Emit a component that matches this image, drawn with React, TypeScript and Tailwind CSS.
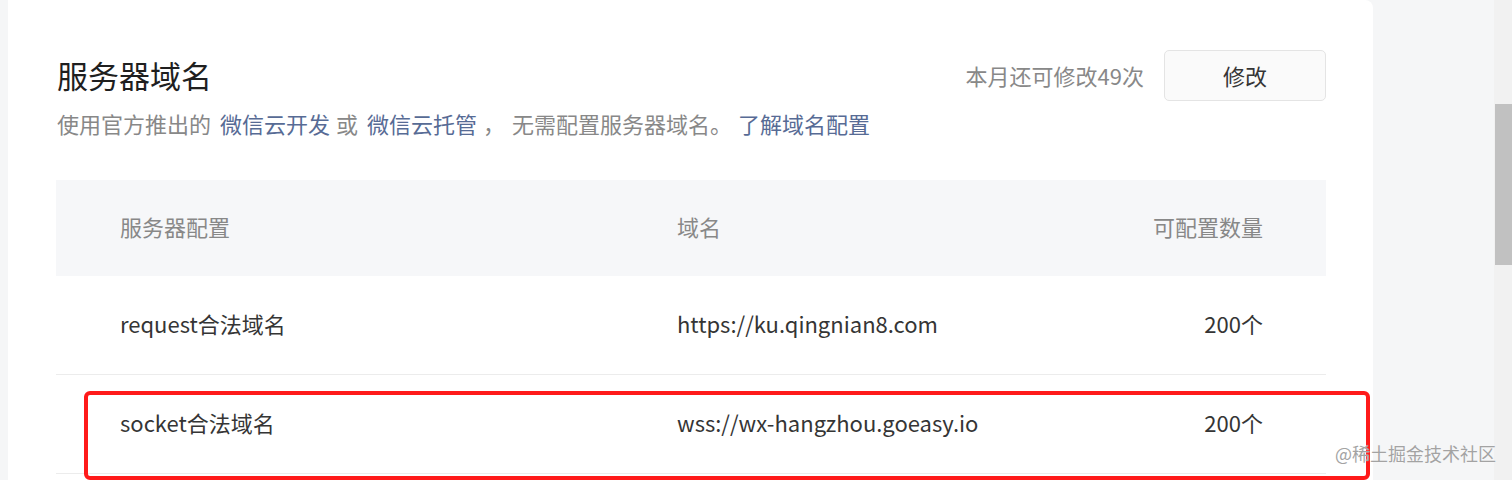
const rows = [
  { name: "request合法域名", domain: "https://ku.qingnian8.com", count: "200个" },
  { name: "socket合法域名", domain: "wss://wx-hangzhou.goeasy.io", count: "200个" },
];

export default function App() {
  return (
    <div
      className="relative flex h-[480px] w-[1512px] overflow-hidden bg-[#f5f6f7]"
      style={{ fontFamily: '"Noto Sans CJK SC", "Noto Sans", sans-serif' }}
    >
      <div className="ml-[8px] h-full w-[1365px] rounded-tr-[8px] bg-white pl-[49px] pr-[47px]">
        <div className="flex items-start justify-between pt-[50px]">
          <div>
            <h1 className="text-[31px] leading-[50px] text-[#1f1f1f]">服务器域名</h1>
            <p className="mt-[-1px] flex text-[22px] leading-[48px] text-[#888888]">
              <span>使用官方推出的</span>
              <span className="ml-[9px] text-[#576b95]">微信云开发</span>
              <span className="ml-[6px]">或</span>
              <span className="ml-[9px] text-[#576b95]">微信云托管</span>
              <span className="ml-[6px]">，</span>
              <span className="ml-[7px]">无需配置服务器域名。</span>
              <span className="ml-[6px] text-[#576b95]">了解域名配置</span>
            </p>
          </div>
          <div className="flex items-center gap-[20px]">
            <span className="text-[22px] text-[#888888]">本月还可修改49次</span>
            <button className="h-[51px] w-[162px] rounded-[5px] border border-[#e4e4e4] bg-[#fafafa] text-[22px] text-[#353535]">
              修改
            </button>
          </div>
        </div>

        <div className="mt-[33px] -ml-[1px]">
          <div className="grid h-[96px] grid-cols-[621px_1fr_auto] items-center bg-[#f6f7f9] pb-[3px] pr-[63px] text-[22px] text-[#888888]">
            <span className="pl-[64px]">服务器配置</span>
            <span>域名</span>
            <span className="text-right">可配置数量</span>
          </div>
          {rows.map((row) => (
            <div
              key={row.name}
              className="grid h-[99px] grid-cols-[621px_1fr_auto] items-center border-b border-[#ececec] pb-[3px] pr-[63px] text-[22px] text-[#353535]"
            >
              <span className="pl-[64px]">{row.name}</span>
              <span>{row.domain}</span>
              <span className="text-right">{row.count}</span>
            </div>
          ))}
        </div>
      </div>

      <div className="flex-1" />
      <div className="w-[18px] bg-[#f1f1f1] pt-[104px]">
        <div className="ml-[1px] h-[161px] bg-[#c1c1c1]" />
      </div>

      <div className="absolute left-[84px] top-[391px] h-[89px] w-[1286px] rounded-[6px] border-[4px] border-[#ff1a1a]" />
      <span
        className="absolute left-[1335px] top-[440px] text-[18px] leading-[26px] text-[#a3a3a3]"
        style={{ textShadow: "0 0 1px #ffffff" }}
      >
        @稀土掘金技术社区
      </span>
    </div>
  );
}
